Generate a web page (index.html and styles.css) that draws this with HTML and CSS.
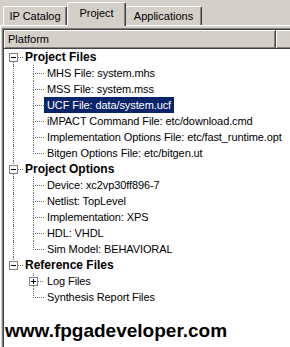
FILE: index.html
```html
<!DOCTYPE html>
<html>
  <head>
    <meta charset="utf-8" />
    <title>Project</title>
    <link rel="stylesheet" href="styles.css">
  </head>
  <body>
    <div class="tabs">
      <div class="tab first">IP Catalog</div>
      <div class="tab active">Project</div>
      <div class="tab last">Applications</div>
    </div>
    <div class="page">
      <div class="tree-view">
        <div class="tree-inner">
          <div class="header">
            <div class="header-cell platform">Platform</div>
            <div class="header-cell"></div>
          </div>
          <div class="tree">
            <!-- Project Files -->
            <div class="row">
              <svg class="expander" width="20" height="16">
                <line class="dots" x1="9.5" y1="13" x2="9.5" y2="16" />
                <line class="dots" x1="14" y1="8.5" x2="20" y2="8.5" />
                <rect x="5.5" y="4.5" width="8" height="8" />
                <line class="sign" x1="7" y1="8.5" x2="12" y2="8.5" />
              </svg>
              <span class="label head">Project Files</span>
            </div>
            <div class="row"><span class="cell pipe"></span><span class="cell tee"></span><span class="label">MHS File: system.mhs</span></div>
            <div class="row"><span class="cell pipe"></span><span class="cell tee"></span><span class="label">MSS File: system.mss</span></div>
            <div class="row"><span class="cell pipe"></span><span class="cell tee"></span><span class="label selected">UCF File: data/system.ucf</span></div>
            <div class="row"><span class="cell pipe"></span><span class="cell tee"></span><span class="label">iMPACT Command File: etc/download.cmd</span></div>
            <div class="row"><span class="cell pipe"></span><span class="cell tee"></span><span class="label">Implementation Options File: etc/fast_runtime.opt</span></div>
            <div class="row"><span class="cell pipe"></span><span class="cell end"></span><span class="label">Bitgen Options File: etc/bitgen.ut</span></div>

            <!-- Project Options -->
            <div class="row">
              <svg class="expander" width="20" height="16">
                <line class="dots" x1="9.5" y1="0" x2="9.5" y2="4" />
                <line class="dots" x1="9.5" y1="13" x2="9.5" y2="16" />
                <line class="dots" x1="14" y1="8.5" x2="20" y2="8.5" />
                <rect x="5.5" y="4.5" width="8" height="8" />
                <line class="sign" x1="7" y1="8.5" x2="12" y2="8.5" />
              </svg>
              <span class="label head">Project Options</span>
            </div>
            <div class="row"><span class="cell pipe"></span><span class="cell tee"></span><span class="label">Device: xc2vp30ff896-7</span></div>
            <div class="row"><span class="cell pipe"></span><span class="cell tee"></span><span class="label">Netlist: TopLevel</span></div>
            <div class="row"><span class="cell pipe"></span><span class="cell tee"></span><span class="label">Implementation: XPS</span></div>
            <div class="row"><span class="cell pipe"></span><span class="cell tee"></span><span class="label">HDL: VHDL</span></div>
            <div class="row"><span class="cell pipe"></span><span class="cell end"></span><span class="label">Sim Model: BEHAVIORAL</span></div>

            <!-- Reference Files -->
            <div class="row">
              <svg class="expander" width="20" height="16">
                <line class="dots" x1="9.5" y1="0" x2="9.5" y2="4" />
                <line class="dots" x1="14" y1="8.5" x2="20" y2="8.5" />
                <rect x="5.5" y="4.5" width="8" height="8" />
                <line class="sign" x1="7" y1="8.5" x2="12" y2="8.5" />
              </svg>
              <span class="label head">Reference Files</span>
            </div>
            <div class="row">
              <span class="cell"></span>
              <svg class="expander" width="20" height="16">
                <line class="dots" x1="9.5" y1="0" x2="9.5" y2="4" />
                <line class="dots" x1="9.5" y1="13" x2="9.5" y2="16" />
                <line class="dots" x1="14" y1="8.5" x2="20" y2="8.5" />
                <rect x="5.5" y="4.5" width="8" height="8" />
                <line class="sign" x1="7" y1="8.5" x2="12" y2="8.5" />
                <line class="sign" x1="9.5" y1="6" x2="9.5" y2="11" />
              </svg>
              <span class="label">Log Files</span>
            </div>
            <div class="row"><span class="cell"></span><span class="cell end"></span><span class="label">Synthesis Report Files</span></div>
          </div>
          <div class="site">www.fpgadeveloper.com</div>
        </div>
      </div>
    </div>
  </body>
</html>
```

FILE: styles.css
```css
:root {
  --face: #d4d0c8;
  --shadow: #808080;
  --dark: #404040;
  --dots: #6c6c6c;
}
*,
*:before,
*:after {
  box-sizing: border-box;
}
html,
body {
  margin: 0;
  height: 100%;
  overflow: hidden;
}
body {
  display: flex;
  flex-direction: column;
  background-color: var(--face);
  color: #000;
  font-family: "Liberation Sans", Arial, sans-serif;
  font-size: 11px;
}
.tabs {
  display: flex;
  align-items: flex-end;
  height: 25px;
  padding-left: 3px;
  flex: none;
}
.tab {
  display: flex;
  align-items: center;
  justify-content: center;
  height: 19px;
  padding-bottom: 1px;
  background-color: var(--face);
  border-top: 1px solid #fff;
  border-left: 1px solid #fff;
  border-right: 1px solid var(--dark);
  border-radius: 2px 2px 0 0;
  box-shadow: inset -1px 0 var(--shadow);
}
.tab.first {
  width: 64px;
}
.tab.active {
  position: relative;
  z-index: 1;
  width: 59px;
  height: 24px;
  margin-bottom: -1px;
  padding-bottom: 3px;
}
.tab.last {
  width: 76px;
  border-left: 0;
}
.page {
  flex: 1;
  display: flex;
  border-top: 1px solid #fff;
  border-left: 1px solid #fff;
  padding: 2px 0 0 1px;
}
.tree-view {
  flex: 1;
  display: flex;
  border-top: 1px solid var(--shadow);
  border-left: 1px solid var(--shadow);
}
.tree-inner {
  flex: 1;
  display: flex;
  flex-direction: column;
  background-color: #fff;
  border-top: 1px solid var(--dark);
  border-left: 1px solid var(--dark);
}
.header {
  display: flex;
  height: 19px;
  flex: none;
  background-color: var(--face);
  border-bottom: 1px solid var(--dark);
  box-shadow: inset 0 -1px var(--shadow);
}
.header-cell {
  flex: 1;
  display: flex;
  align-items: center;
  padding: 0 0 2px 3px;
  border-top: 1px solid #fff;
  border-left: 1px solid #fff;
}
.header-cell.platform {
  flex: none;
  width: 272px;
  border-right: 1px solid var(--dark);
  box-shadow: inset -1px -1px var(--shadow);
}
.tree {
  display: flex;
  flex-direction: column;
}
.row {
  display: flex;
  height: 16px;
  align-items: stretch;
}
.cell,
.expander {
  flex: none;
  width: 20px;
  height: 16px;
}
.cell.pipe:before {
  content: "";
  display: block;
  margin-left: 9px;
  height: 16px;
  border-left: 1px dotted var(--dots);
}
.cell.tee:before,
.cell.end:before {
  content: "";
  display: block;
  margin-left: 9px;
  width: 11px;
  height: 9px;
  border-left: 1px dotted var(--dots);
  border-bottom: 1px dotted var(--dots);
}
.cell.tee:after {
  content: "";
  display: block;
  margin-left: 9px;
  height: 7px;
  border-left: 1px dotted var(--dots);
}
.expander .dots {
  stroke: var(--dots);
  stroke-width: 1;
  stroke-dasharray: 1 1;
}
.expander rect {
  fill: #fff;
  stroke: var(--shadow);
  stroke-width: 1;
}
.expander .sign {
  stroke: #000;
  stroke-width: 1;
}
.label {
  line-height: 16px;
  padding: 0 3px;
  letter-spacing: -0.1px;
  white-space: nowrap;
}
.label.head {
  padding-left: 1px;
  font-size: 12px;
  font-weight: bold;
  letter-spacing: 0;
}
.label.selected {
  background-color: #0a246a;
  color: #fff;
}
.site {
  margin-top: 15px;
  padding-left: 1px;
  font-size: 19px;
  font-weight: bold;
  white-space: nowrap;
}
```
